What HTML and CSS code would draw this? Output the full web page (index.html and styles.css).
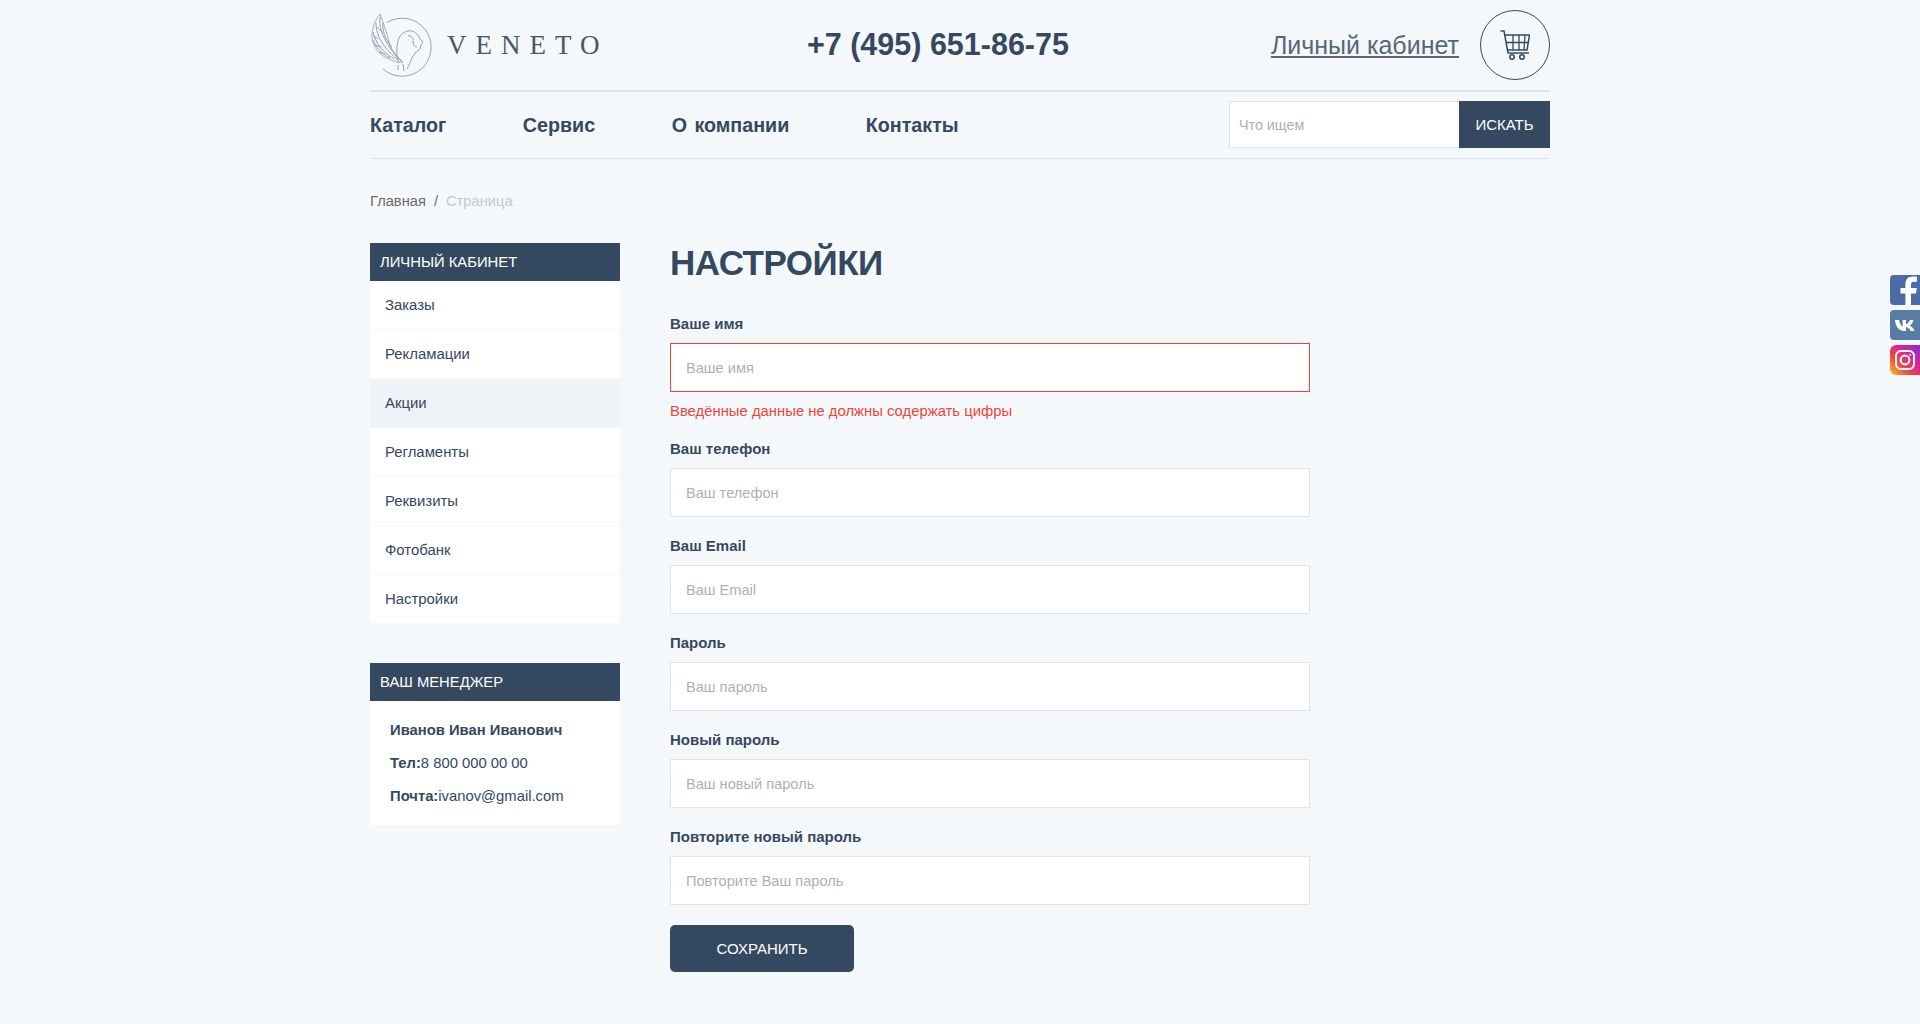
FILE: index.html
```html
<!DOCTYPE html>
<html lang="ru">
  <head>
    <meta charset="UTF-8" />
    <meta name="viewport" content="width=device-width, initial-scale=1.0"/>
    <title>Настройки - Veneto</title>
    <link rel="stylesheet" href="styles.css">
  </head>

  <body>
    <div class="wrap">
      <header class="top">
        <a class="logo" href="#">
          <svg class="logo-mark" width="62" height="66" viewBox="0 0 62 66" fill="none" stroke="#7d8ca0" stroke-width="0.8">
            <path d="M17 10.5 A29 29 0 1 1 13 57"/>
            <path d="M10 2 C5 8 2 16 2 25 C3 35 9 43 19 47 C25 50 31 51 33 50 C27 45 22 40 19 30 C17 21 13 10 10 2Z" stroke="#8b99aa"/>
            <path d="M10 5 C9 15 12 29 31 49 M6 11 C6 21 10 33 28 48 M3 20 C5 29 10 38 24 47 M3 28 C6 35 11 41 20 46 M13 11 C12 18 15 28 22 35 M4 24 L8 27 M5 33 L11 35 M9 40 L15 42 M7 15 L11 19"/>
            <path d="M29 51 C26 44 26 34 29 26 C32 20 38 18 42 19 C46 20 49 24 50 27 L53 30 L51 33 L50 37 L45 41 L42 46 L40 51 L37 57"/>
            <path d="M38 24 C41 23 44 26 43 30 C43 33 45 35 47 35 M28 53 L28 58 M33 52 L34 59"/>
          </svg>
          <span class="logo-text">VENETO</span>
        </a>
        <a class="phone" href="#">+7 (495) 651-86-75</a>
        <div class="top-right">
          <a class="cabinet" href="#">Личный кабинет</a>
          <a class="cart" href="#">
            <svg width="30" height="30" viewBox="0 0 30 30" fill="none" stroke="#34495f" stroke-width="1.5">
              <path d="M0.5 1 H4 L8 23 H29"/>
              <path d="M5 5 H29.5 L27 20 H7.5"/>
              <path d="M6 12.5 H28.3 M13 5 V20 M19 5 V20 M25 5 L24 20" stroke-width="1.3"/>
              <circle cx="12" cy="27" r="2.2"/>
              <circle cx="22" cy="27" r="2.2"/>
            </svg>
          </a>
        </div>
      </header>

      <nav class="nav">
        <ul class="menu">
          <li><a href="#">Каталог</a></li>
          <li><a href="#">Сервис</a></li>
          <li><a href="#">О компании</a></li>
          <li><a href="#">Контакты</a></li>
        </ul>
        <form class="search">
          <input type="text" placeholder="Что ищем" />
          <button type="button">ИСКАТЬ</button>
        </form>
      </nav>

      <div class="crumbs">
        <a href="#">Главная</a><span class="sep">/</span><span class="current">Страница</span>
      </div>

      <div class="page">
        <aside class="side">
          <h3 class="side-title">ЛИЧНЫЙ КАБИНЕТ</h3>
          <ul class="side-menu">
            <li><a href="#">Заказы</a></li>
            <li><a href="#">Рекламации</a></li>
            <li class="active"><a href="#">Акции</a></li>
            <li><a href="#">Регламенты</a></li>
            <li><a href="#">Реквизиты</a></li>
            <li><a href="#">Фотобанк</a></li>
            <li><a href="#">Настройки</a></li>
          </ul>

          <h3 class="side-title manager-title">ВАШ МЕНЕДЖЕР</h3>
          <div class="manager">
            <p class="manager-name">Иванов Иван Иванович</p>
            <p><strong>Тел:</strong>8 800 000 00 00</p>
            <p><strong>Почта:</strong>ivanov@gmail.com</p>
          </div>
        </aside>

        <main class="main">
          <h1>НАСТРОЙКИ</h1>
          <form class="settings">
            <label for="name">Ваше имя</label>
            <input class="bad" type="text" id="name" placeholder="Ваше имя" />
            <p class="error">Введённые данные не должны содержать цифры</p>

            <label for="phone">Ваш телефон</label>
            <input type="text" id="phone" placeholder="Ваш телефон" />

            <label for="email">Ваш Email</label>
            <input type="text" id="email" placeholder="Ваш Email" />

            <label for="pass">Пароль</label>
            <input type="password" id="pass" placeholder="Ваш пароль" />

            <label for="pass2">Новый пароль</label>
            <input type="password" id="pass2" placeholder="Ваш новый пароль" />

            <label for="pass3">Повторите новый пароль</label>
            <input type="password" id="pass3" placeholder="Повторите Ваш пароль" />

            <button type="button" class="save">СОХРАНИТЬ</button>
          </form>
        </main>
      </div>
    </div>

    <div class="social">
      <a href="#" class="soc soc-fb">
        <svg width="30" height="30" viewBox="0 0 30 30"><path fill="#fff" d="M21 30 V18.5 H26 L26.8 13 H21 V9.8 C21 8 21.6 6.8 24 6.8 H27 V1.8 C26 1.7 24.6 1.5 22.8 1.5 C18.4 1.5 15.4 4.2 15.4 9.2 V13 H10.5 V18.5 H15.4 V30 Z"/></svg>
      </a>
      <a href="#" class="soc soc-vk">
        <svg width="30" height="30" viewBox="0 0 30 30"><path fill="#fff" d="M5 10 H9 C9.5 13 11 16 12.6 16.8 V10 H16 V14.4 C17.6 14 19.2 12 20 10 H23.6 C23 12.6 21 14.6 19.8 15.6 C21.2 16.4 23.4 18.2 24.6 21 H20.8 C20 19 18 17.4 16 17 V21 H14.6 C9 21 5.6 16.8 5 10 Z"/></svg>
      </a>
      <a href="#" class="soc soc-ig">
        <svg width="30" height="30" viewBox="0 0 30 30" fill="none" stroke="#fff" stroke-width="2"><rect x="6" y="6" width="18" height="18" rx="5"/><circle cx="15" cy="15" r="4.4"/><circle cx="20.2" cy="9.8" r="1" fill="#fff" stroke="none"/></svg>
      </a>
    </div>
  </body>
</html>
```

FILE: styles.css
```css
body {
  margin: 0;
  background: #f5f8fb;
  color: #34495f;
  font-family: "Liberation Sans", Arial, sans-serif;
  font-size: 14px;
}
a {
  color: inherit;
  text-decoration: none;
}
ul {
  list-style: none;
  margin: 0;
  padding: 0;
}
input::placeholder {
  color: #b0b0b0;
  opacity: 1;
}
.wrap {
  width: 1180px;
  margin: 0 auto;
}

/* header */
.top {
  display: flex;
  align-items: center;
  justify-content: space-between;
  height: 90px;
  border-bottom: 2px solid #e0e4ea;
}
.logo {
  display: flex;
  align-items: center;
  width: 235px;
}
.logo-mark {
  flex-shrink: 0;
}
.logo-text {
  margin-left: 15px;
  font-family: "Liberation Serif", serif;
  font-size: 27px;
  letter-spacing: 9px;
  color: #45586d;
}
.phone {
  margin-bottom: 2px;
  font-size: 30.5px;
  font-weight: bold;
}
.top-right {
  display: flex;
  align-items: center;
}
.cabinet {
  font-size: 25px;
  color: #56677a;
  text-decoration: underline;
  margin-right: 21px;
}
.cart {
  display: flex;
  align-items: center;
  justify-content: center;
  width: 68px;
  height: 68px;
  border: 1px solid #34495f;
  border-radius: 50%;
}

/* nav */
.nav {
  display: flex;
  align-items: center;
  justify-content: space-between;
  height: 66px;
  border-bottom: 1px solid #e0e4ea;
}
.menu {
  display: flex;
  gap: 76.5px;
  font-size: 19.7px;
  font-weight: bold;
  word-spacing: 2px;
}
.search {
  display: flex;
  height: 47px;
  margin-bottom: 1px;
}
.search input {
  box-sizing: border-box;
  width: 230px;
  padding: 0 9px;
  border: 1px solid #dfe2e7;
  border-right: 0;
  background: #fff;
  font: 14.3px "Liberation Sans", Arial, sans-serif;
}
.search button {
  width: 91px;
  border: 0;
  background: #34495f;
  color: #fff;
  font: 15px "Liberation Sans", Arial, sans-serif;
}

/* breadcrumbs */
.crumbs {
  padding-top: 33px;
  height: 51px;
  line-height: 18px;
  font-size: 14.7px;
  color: #6b6b6b;
}
.sep {
  margin: 0 8px;
}
.current {
  color: #c4c8cd;
}

/* sidebar */
.page {
  display: flex;
}
.side {
  width: 250px;
  margin-right: 50px;
}
.side-title {
  margin: 0;
  height: 38px;
  padding-left: 10px;
  line-height: 38px;
  background: #34495f;
  color: #fff;
  font-size: 14.8px;
  font-weight: normal;
}
.side-menu li {
  box-sizing: border-box;
  height: 49px;
  padding-left: 15px;
  line-height: 48px;
  background: #fff;
  border-bottom: 1px solid #f5f8fb;
  font-size: 14.9px;
}
.side-menu li.active {
  background: #eff3f7;
}
.manager-title {
  margin-top: 39px;
}
.manager {
  height: 124px;
  box-sizing: border-box;
  padding: 20px 20px 0;
  background: #fff;
  font-size: 14.8px;
}
.manager p {
  margin: 0 0 15px;
  line-height: 18px;
}
.manager-name {
  font-weight: bold;
}

/* form */
.main {
  width: 640px;
}
h1 {
  margin: 0;
  height: 64px;
  font-size: 35px;
  line-height: 40px;
  letter-spacing: -0.5px;
}
.settings label {
  display: block;
  height: 36px;
  padding-top: 9px;
  box-sizing: border-box;
  line-height: 16px;
  font-size: 15px;
  font-weight: bold;
}
.settings input {
  display: block;
  box-sizing: border-box;
  width: 640px;
  height: 49px;
  margin-bottom: 12px;
  padding: 0 15px;
  border: 1px solid #dfe2e7;
  background: #fff;
  font: 14.6px "Liberation Sans", Arial, sans-serif;
}
.settings input.bad {
  border-color: #f44336;
  margin-bottom: 0;
}
.error {
  margin: 0;
  height: 40px;
  padding-top: 10px;
  box-sizing: border-box;
  line-height: 18px;
  font-size: 14.85px;
  color: #f44336;
}
.save {
  display: block;
  width: 184px;
  height: 47px;
  margin-top: 20px;
  border: 0;
  border-radius: 5px;
  background: #34495f;
  color: #fff;
  font: 15px "Liberation Sans", Arial, sans-serif;
}

/* social */
.social {
  position: absolute;
  top: 275px;
  right: 0;
  display: flex;
  flex-direction: column;
  gap: 5px;
}
.soc {
  display: block;
  width: 30px;
  height: 30px;
  border-radius: 4px 0 0 4px;
}
.soc-fb {
  background: #4a6ca8;
}
.soc-vk {
  background: #587ca3;
}
.soc-ig {
  background: linear-gradient(45deg, #fcb033 5%, #f0463f 35%, #d6249f 65%, #7c35c6 100%);
  border-radius: 6px 0 0 6px;
}
```
